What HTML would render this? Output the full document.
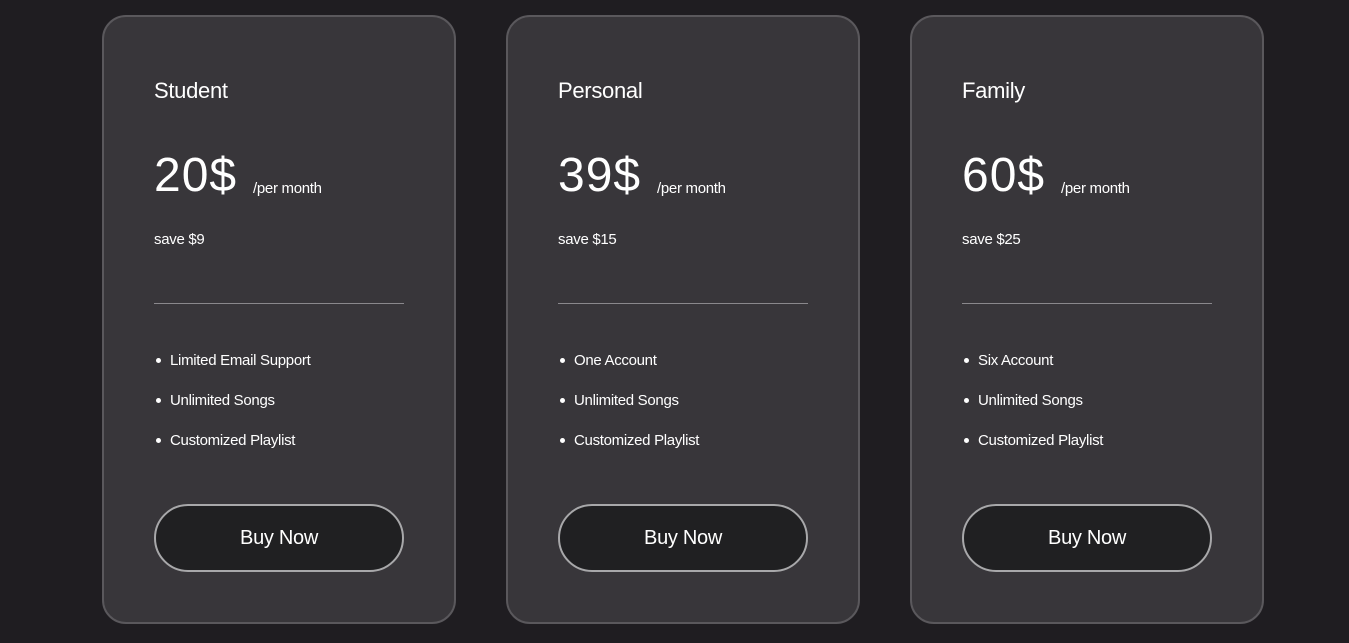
<!DOCTYPE html>
<html><head><style>
*{margin:0;padding:0;box-sizing:border-box}
body{width:1349px;height:643px;background:#1f1d21;font-family:"Liberation Sans",sans-serif;color:#fff;position:relative;overflow:hidden}
.card{position:absolute;top:15px;width:354px;height:609px;background:#38363a;border:2px solid #5a585c;border-radius:24px}
.t{position:absolute;left:50px;top:61px;font-size:22px;letter-spacing:-0.3px}
.p{position:absolute;left:50px;top:131px;font-size:48px;letter-spacing:1px}
.pm{position:absolute;left:149px;top:163px;font-size:15px;letter-spacing:-0.3px}
.s{position:absolute;left:50px;top:214px;font-size:15px;letter-spacing:-0.3px}
.hr{position:absolute;left:50px;top:286px;width:250px;height:1px;background:#8a888c}
.li{position:absolute;left:66px;font-size:15px;letter-spacing:-0.3px}
.li:before{content:"";position:absolute;left:-14px;top:6px;width:5px;height:5px;border-radius:50%;background:#fff}
.b{position:absolute;left:50px;top:487px;width:250px;height:68px;border:2px solid #a8a8aa;border-radius:34px;background:#202022;text-align:center;line-height:64px;font-size:20px;letter-spacing:-0.3px}
</style></head><body>
<div class="card" style="left:102px"><div class="t">Student</div><div class="p">20$</div><div class="pm">/per month</div><div class="s">save $9</div><div class="hr"></div>
<div class="li" style="top:335px">Limited Email Support</div><div class="li" style="top:375px">Unlimited Songs</div><div class="li" style="top:415px">Customized Playlist</div><div class="b">Buy Now</div></div>
<div class="card" style="left:506px"><div class="t">Personal</div><div class="p">39$</div><div class="pm">/per month</div><div class="s">save $15</div><div class="hr"></div>
<div class="li" style="top:335px">One Account</div><div class="li" style="top:375px">Unlimited Songs</div><div class="li" style="top:415px">Customized Playlist</div><div class="b">Buy Now</div></div>
<div class="card" style="left:910px"><div class="t">Family</div><div class="p">60$</div><div class="pm">/per month</div><div class="s">save $25</div><div class="hr"></div>
<div class="li" style="top:335px">Six Account</div><div class="li" style="top:375px">Unlimited Songs</div><div class="li" style="top:415px">Customized Playlist</div><div class="b">Buy Now</div></div>
</body></html>
